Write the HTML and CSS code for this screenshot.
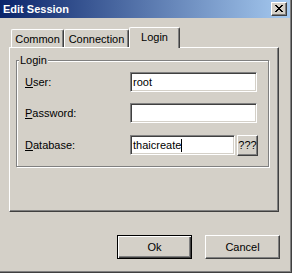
FILE: index.html
```html
<html>
    <head>
        <meta charset="utf-8">
        <link rel="stylesheet" href="styles.css">
    </head>
    <body>
        <div class="window">
            <div class="titlebar">
                <span class="title">Edit Session</span>
                <div class="close">
                    <svg width="8" height="7" viewBox="0 0 8 7" shape-rendering="crispEdges">
                        <path d="M0 0h2v1h-2z M6 0h2v1h-2z M1 1h2v1h-2z M5 1h2v1h-2z M2 2h4v1h-4z M3 3h2v1h-2z M2 4h4v1h-4z M1 5h2v1h-2z M5 5h2v1h-2z M0 6h2v1h-2z M6 6h2v1h-2z" fill="#000"/>
                    </svg>
                </div>
            </div>
            <div class="tabs">
                <div class="tab common">Common</div>
                <div class="tab connection">Connection</div>
                <div class="tab login active">Login</div>
            </div>
            <div class="panel">
                <div class="group">
                    <span class="legend">Login</span>
                    <div class="row">
                        <label><u>U</u>ser:</label>
                        <div class="field">root</div>
                    </div>
                    <div class="row">
                        <label><u>P</u>assword:</label>
                        <div class="field"></div>
                    </div>
                    <div class="row db">
                        <label><u>D</u>atabase:</label>
                        <div class="field short">thaicreate<span class="caret"></span></div>
                        <div class="btn small">???</div>
                    </div>
                </div>
            </div>
            <div class="buttons">
                <div class="btn default">Ok</div>
                <div class="btn">Cancel</div>
            </div>
        </div>
    </body>
</html>
```

FILE: styles.css
```css
body{
    margin: 0;
    width: 292px;
    height: 273px;
    overflow: hidden;
    background: #d4d0c8;
    font-family: "Liberation Sans", Arial, sans-serif;
    font-size: 11px;
    color: #000;
}
.window{
    width: 292px;
    height: 273px;
    box-sizing: border-box;
    border-right: 1px solid #404040;
    border-bottom: 1px solid #404040;
    box-shadow: inset -1px -1px #808080;
    display: flex;
    flex-direction: column;
}
.titlebar{
    height: 18px;
    margin-right: 1px;
    padding: 0 3px 0 3px;
    display: flex;
    align-items: center;
    justify-content: space-between;
    background: linear-gradient(to right, #0a246a, #a6caf0);
}
.title{
    color: #fff;
    font-weight: bold;
    font-size: 11px;
}
.close{
    width: 16px;
    height: 14px;
    box-sizing: border-box;
    background: #d4d0c8;
    border: 1px solid;
    border-color: #fff #404040 #404040 #fff;
    box-shadow: inset -1px -1px #808080;
    display: flex;
    align-items: center;
    justify-content: center;
}
.close svg{
    margin: 0 1px 1px 0;
}
.tabs{
    display: flex;
    align-items: flex-start;
    height: 18px;
    margin: 11px 0 0 11px;
}
.tab{
    height: 18px;
    box-sizing: border-box;
    padding-top: 3px;
    text-align: center;
    line-height: 12px;
    border-top: 1px solid #fff;
    border-left: 1px solid #fff;
    border-right: 1px solid #404040;
    box-shadow: inset -1px 0 #808080;
    border-radius: 2px 2px 0 0;
}
.common{ width: 53px; }
.connection{ width: 65px; }
.login{ width: 51px; }
.tab.active{
    position: relative;
    z-index: 1;
    height: 21px;
    margin-top: -2px;
    background: #d4d0c8;
}
.panel{
    width: 270px;
    height: 165px;
    margin-left: 9px;
    box-sizing: border-box;
    border-top: 1px solid #fff;
    border-left: 1px solid #fff;
    border-right: 1px solid #404040;
    border-bottom: 1px solid #404040;
    box-shadow: inset -1px -1px #808080;
    padding: 12px 0 0 6px;
}
.group{
    position: relative;
    width: 253px;
    height: 107px;
    box-sizing: border-box;
    border: 1px solid #808080;
    box-shadow: 1px 1px #fff, inset 1px 1px #fff;
    padding: 11px 0 0 8px;
    display: flex;
    flex-direction: column;
    gap: 11px;
}
.legend{
    position: absolute;
    top: -7px;
    left: 2px;
    padding: 0 1px;
    line-height: 12px;
    background: #d4d0c8;
}
.row{
    display: flex;
    align-items: center;
    height: 20px;
}
.row.db{
    margin-top: 1px;
}
.row label{
    width: 105px;
}
.field{
    width: 127px;
    height: 20px;
    box-sizing: border-box;
    border: 1px solid;
    border-color: #808080 #fff #fff #808080;
    box-shadow: inset 1px 1px #404040, inset -1px -1px #d4d0c8;
    background: #fff;
    padding: 0 2px;
    line-height: 18px;
    display: flex;
    align-items: center;
}
.field.short{
    width: 105px;
}
.caret{
    width: 1px;
    height: 13px;
    background: #000;
}
.btn{
    width: 75px;
    height: 24px;
    box-sizing: border-box;
    border: 1px solid;
    border-color: #fff #404040 #404040 #fff;
    box-shadow: inset -1px -1px #808080;
    display: flex;
    align-items: center;
    justify-content: center;
}
.btn.small{
    width: 21px;
    height: 21px;
    margin-left: 2px;
}
.btn.default{
    border: 1px solid #000;
    box-shadow: inset 1px 1px #fff, inset -1px -1px #404040, inset -2px -2px #808080;
}
.buttons{
    display: flex;
    justify-content: flex-end;
    gap: 13px;
    margin-top: 23px;
    padding-right: 11px;
}
```
